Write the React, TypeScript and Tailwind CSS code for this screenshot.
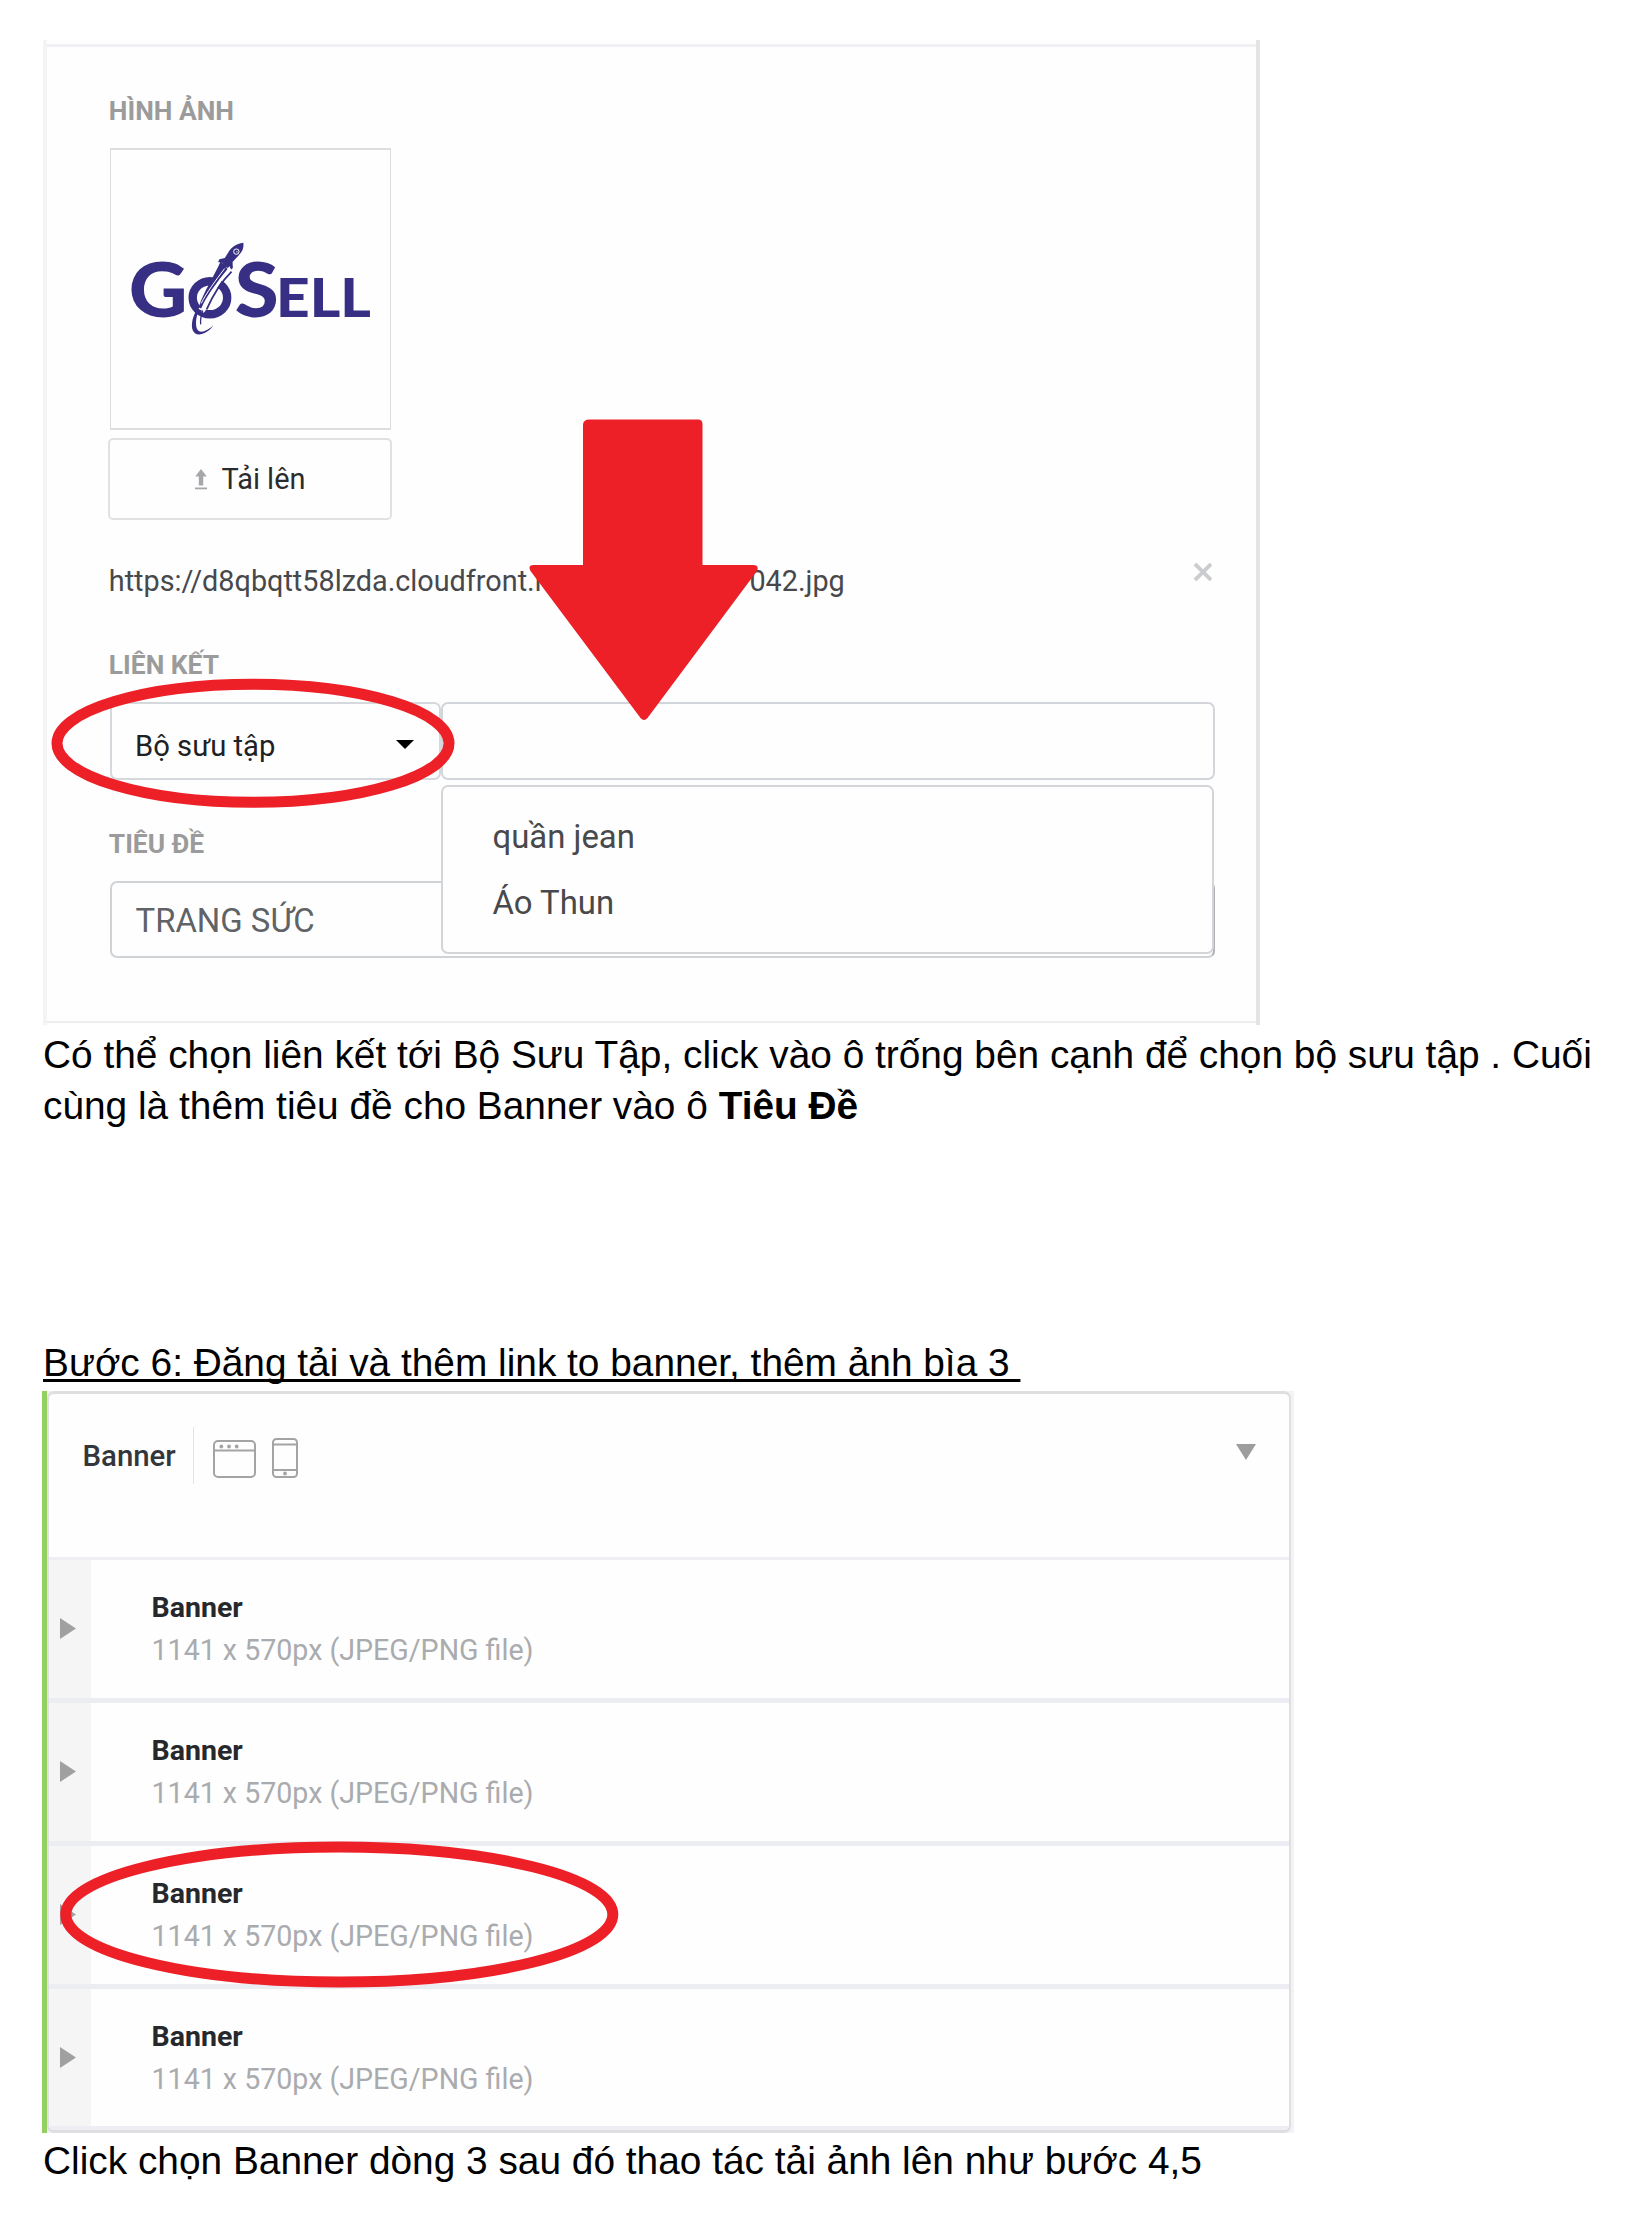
import type { ReactNode } from 'react';

const RED = '#ed2028';

function GoSellLogo() {
  return (
    <svg viewBox="110.500 149 279 279" className="h-full w-full" fill="#372f83">
      <g fontFamily="Lato, sans-serif" fontWeight={900} fill="#372f83">
        <text transform="translate(127.8 316.9) scale(1.06 1)" fontSize="77">G</text>
        <text transform="translate(234.3 316.9) scale(1.04 1)" fontSize="77">S</text>
        <text transform="translate(275.6 316.7) scale(1.1 1)" fontSize="53.5">ELL</text>
      </g>
      <ellipse cx="209.3" cy="297.3" rx="17.3" ry="16.6" fill="none" stroke="#372f83" strokeWidth="8.4" />
      {/* exhaust trail */}
      <path d="M226 268 C215 281 207 294 201 310" fill="none" stroke="#fff" strokeWidth="7" />
      <path d="M220 261 C214 275 203 291 198 307 L200.500 308 C206 295 217 281 227.500 269 Z" />
      <path d="M229 268 C218 281 208 295 202 312" fill="none" stroke="#fff" strokeWidth="2.600" />
      <path d="M224 268 C215 280 206 292 200.500 303" fill="none" stroke="#fff" strokeWidth="1" />
      <path d="M231 271 C221 281 212 295 206 309" fill="none" stroke="#372f83" strokeWidth="1.8" />
      <path d="M197 308 C192 315 190 324 192 330 C195 337.500 206 334.500 213 325 C207 330.500 199 334 196.500 329 C194.500 324 195 316 199 309 Z" />
      <path d="M202 310 C200 316 199.500 320 200 324" fill="none" stroke="#372f83" strokeWidth="1.300" />
      {/* rocket */}
      <path d="M242.800 242 C235.500 243 230 247 227.500 252 L224.200 257.500 L218.800 258.700 L217.500 261.500 L222 262.500 L221 265 L227.500 267.500 L228.800 265.500 L230.500 269 L232.300 267.500 L232 261.500 L238 255 C242 250.500 243.500 247 242.800 242 Z" />
      <circle cx="235.800" cy="251" r="2.700" fill="#372f83" stroke="#fff" strokeWidth="1" />
      <path d="M237 251.200 H235.600" stroke="#fff" strokeWidth="0.900" />
    </svg>
  );
}

function UploadIcon() {
  return (
    <svg viewBox="0 0 12 21" className="h-[21px] w-3" fill="#a6a7ab">
      <path d="M6 0 L11.800 7.500 H8.200 V16.500 H3.800 V7.500 H0.200 Z" />
      <rect x="0" y="18.500" width="12" height="1.800" />
    </svg>
  );
}

function BrowserIcon() {
  return (
    <svg viewBox="0 0 43 38" className="h-[38px] w-[43px]" fill="none" stroke="#a3a4a6" strokeWidth="2">
      <rect x="1" y="1" width="41" height="36" rx="4" />
      <path d="M1 10.500 H42" />
      <g fill="#a3a4a6" stroke="none">
        <circle cx="8.300" cy="6.500" r="1.900" />
        <circle cx="16" cy="6.500" r="1.900" />
        <circle cx="23.700" cy="6.500" r="1.900" />
      </g>
    </svg>
  );
}

function PhoneIcon() {
  return (
    <svg viewBox="0 0 26 40" className="h-10 w-[26px]" fill="none" stroke="#a3a4a6" strokeWidth="2">
      <rect x="1" y="1" width="24" height="38" rx="3.500" />
      <path d="M1 6.500 H25 M1 32 H25" />
      <circle cx="13" cy="35.500" r="1.900" fill="#a3a4a6" stroke="none" />
    </svg>
  );
}

function Label({ children, className }: { children: ReactNode; className: string }) {
  return (
    <div className={`ml-[0.8px] h-8 whitespace-nowrap text-[26.400px] leading-8 font-bold text-[#9b9b9b] ${className}`}>
      {children}
    </div>
  );
}

function ImagePanel() {
  return (
    <section className="relative h-[985px] w-[1217px] border-x-4 border-l-[#f4f4f6] border-r-[#e4e4e5] bg-[#fefefe] pt-1 font-[Roboto,sans-serif]">
      <div className="h-[979px] border-t-[3px] border-b-2 border-t-[#f0f0f5] border-b-[#eeeef1] pl-[61px]">
        <Label className="mt-[48px]">HÌNH ẢNH</Label>
        <div className="mt-[21px] ml-[1.5px] h-[282px] w-[281px] border-x border-y-2 border-[#dedede]">
          <GoSellLogo />
        </div>
        <button className="mt-2 flex h-[82px] w-[284px] items-center justify-center gap-[15px] rounded-[5px] border-2 border-[#e1e1e2] text-[28.900px] leading-[34px] text-[#2a2b2d]">
          <UploadIcon />
          <span>Tải lên</span>
        </button>
        <div className="mt-11 flex h-[34px] w-[1104px] justify-between text-[28.8px] leading-[34px] whitespace-nowrap text-[#46484b]">
          <div className="ml-[0.8px] flex w-[736px] justify-between">
            <span>https://d8qbqtt58lzda.cloudfront.n</span>
            <span>042.jpg</span>
          </div>
          <svg viewBox="0 0 18 18" className="-mt-px h-[18px] w-[18px]" stroke="#cbccd0" strokeWidth="3.800">
            <path d="M1 1 L17 17 M17 1 L1 17" />
          </svg>
        </div>
        <Label className="mt-[51px]">LIÊN KẾT</Label>
        <div className="mt-[21px] ml-[1.5px] flex h-[78px] w-[1105px]">
          <div className="flex w-[331px] items-center justify-between rounded-[7px] border-2 border-[#d5d8dc] pt-1.5 pr-6 pl-[23.500px] text-[29.2px] leading-[34px] text-[#202124]">
            <span className="mt-[3px]">Bộ sưu tập</span>
            <svg viewBox="0 0 18 9" className="mr-px h-[9px] w-[18px]">
              <path d="M0 0 H18 L9 9 Z" fill="#000" />
            </svg>
          </div>
          <div className="relative flex-1 rounded-[7px] border-2 border-[#d2d5d9]">
            <div className="absolute top-[81px] -left-0.5 z-10 h-[169px] w-[773px] rounded-[7px] border-2 border-[#d3d5d8] bg-[#fefefe] pt-[17px] pl-[50px] text-[32.9px] leading-[66px] text-[#47494c]">
              <div>quần jean</div>
              <div>Áo Thun</div>
            </div>
          </div>
        </div>
        <Label className="mt-[48px]">TIÊU ĐỀ</Label>
        <div className="mt-[21px] ml-[1.5px] h-[77px] w-[1105px] rounded-[7px] border-2 border-[#d0d3d6] border-r-[#b0b2b5] pl-6 text-[32.9px] leading-[75px] text-[#5f6266]">
          TRANG SỨC
        </div>
      </div>

      {/* hand-drawn markers over the form */}
      <svg viewBox="0 0 404 130" className="absolute top-[638px] left-[4px] z-20 h-[130px] w-[404px]">
        <ellipse cx="202" cy="65.300" rx="196" ry="59" fill="none" stroke={RED} strokeWidth="11" />
      </svg>
      <svg viewBox="0 0 230 302" className="absolute top-[379px] left-[482px] z-20 h-[302px] w-[230px]">
        <path
          d="M60.500 0.500 H169 Q173.500 0.500 173.500 5 V146 H224 Q230.500 146 228 152 L118.500 299 Q115 303 111.500 299 L1.500 152 Q-1.500 146 4.500 146 H54 V6 Q54 0.500 60.500 0.500 Z"
          fill={RED}
        />
      </svg>
    </section>
  );
}

function BannerRow({ last = false }: { last?: boolean }) {
  return (
    <div className={`flex border-[#ebedf3] ${last ? 'h-[137px]' : 'h-[143px] border-b-[5px]'}`}>
      <div className="flex w-[42px] items-center bg-[#f5f5f5] pl-[11px]">
        <svg viewBox="0 0 16 21" className="-mt-px h-[21px] w-4">
          <path d="M0 0 L16 10.500 L0 21 Z" fill="#a0a0a0" />
        </svg>
      </div>
      <div className="pt-[27px] pl-[60.500px] whitespace-nowrap">
        <div className="h-[42px] text-[28.500px] leading-[42px] font-bold text-[#26282c]">Banner</div>
        <div className="h-[42px] text-[28.600px] leading-[42px] text-[#a9abae]">1141 x 570px (JPEG/PNG file)</div>
      </div>
    </div>
  );
}

function BannerPanel() {
  return (
    <section className="relative -ml-px flex h-[742px] w-[1252px] bg-[#f3f3f5] font-[Roboto,sans-serif]">
      <div className="w-[5px] bg-[#94d060]" />
      <div className="mr-[3px] flex-1 overflow-hidden rounded-[7px] border-t-[3px] border-r-2 border-b-[3px] border-l-2 border-[#dfdfe1] bg-[#fefefe]">
        <div className="flex h-[166px] items-start border-b-[3px] border-[#eeeff3] pt-[33px] pr-[33px] pl-[33.500px]">
          <div className="h-[57px] border-r border-[#e3e3e5] pr-[17.500px] text-[29.400px] leading-[58px] font-medium text-[#33363a]">
            Banner
          </div>
          <div className="mt-[10.500px] ml-[18.500px] flex items-end gap-4">
            <BrowserIcon />
            <PhoneIcon />
          </div>
          <svg viewBox="0 0 20 16" className="mt-[17px] ml-auto h-4 w-5">
            <path d="M0 0 H20 L10 16 Z" fill="#9d9d9d" />
          </svg>
        </div>
        <BannerRow />
        <BannerRow />
        <BannerRow />
        <BannerRow last />
        <div className="h-1 bg-[#edeef4]" />
      </div>
      <svg viewBox="0 0 560 148" className="absolute top-[449px] left-[17px] h-[148px] w-[560px]">
        <ellipse cx="280.300" cy="74.500" rx="273.500" ry="67.500" fill="none" stroke={RED} strokeWidth="11" />
      </svg>
    </section>
  );
}

export default function App() {
  return (
    <main className="h-[2219px] w-[1649px] overflow-hidden bg-white pt-10 pl-[43px] font-['Liberation_Sans',Arial,sans-serif] text-[38.840px] leading-[51.400px] text-black">
      <ImagePanel />
      <p className="mt-1 whitespace-nowrap">
        Có thể chọn liên kết tới Bộ Sưu Tập, click vào ô trống bên cạnh để chọn bộ sưu tập . Cuối
        <br />
        cùng là thêm tiêu đề cho Banner vào ô <b>Tiêu Đề</b>
      </p>
      <h2 className="mt-[205px] whitespace-pre underline decoration-[2.5px] underline-offset-[3px] [text-decoration-skip-ink:none]">
        {'Bước 6: Đăng tải và thêm link to banner, thêm ảnh bìa 3 '}
      </h2>
      <div className="mt-[3px]">
        <BannerPanel />
      </div>
      <p className="mt-0.5 whitespace-nowrap">Click chọn Banner dòng 3 sau đó thao tác tải ảnh lên như bước 4,5</p>
    </main>
  );
}
